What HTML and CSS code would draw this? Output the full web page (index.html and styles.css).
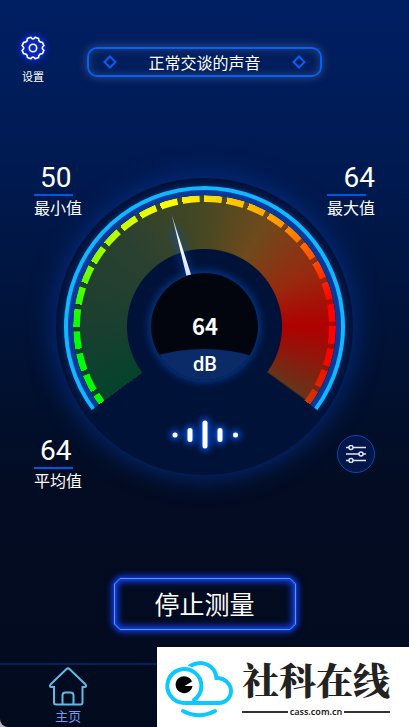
FILE: index.html
```html
<!DOCTYPE html>
<html lang="zh-CN">
<head>
<meta charset="utf-8">
<meta name="viewport" content="width=device-width, initial-scale=1">
<title>分贝测量</title>
<link rel="stylesheet" href="styles.css">
</head>
<body>
<div class="app">
  <header class="header">
    <button class="settings" type="button">
      <svg class="settings-icon" viewBox="0 0 26 26" aria-hidden="true">
        <path d="M10.8 2.2Q13 5.6 15.2 2.2L18.6 3.5Q18.5 7.4 22.4 7.4L23.9 10.7Q20.6 13 23.9 15.3L22.4 18.6Q18.5 18.6 18.6 22.5L15.2 23.8Q13 20.4 10.8 23.8L7.4 22.5Q7.5 18.6 3.6 18.6L2.1 15.3Q5.4 13 2.1 10.7L3.6 7.4Q7.5 7.4 7.4 3.5Z"/>
        <circle cx="13" cy="13" r="3.7"/>
      </svg>
      <span>设置</span>
    </button>
    <div class="level">
      <svg class="diamond" viewBox="0 0 14 14" aria-hidden="true"><path d="M7 1.5 12.500 7 7 12.500 1.500 7Z"/></svg>
      <span>正常交谈的声音</span>
      <svg class="diamond" viewBox="0 0 14 14" aria-hidden="true"><path d="M7 1.5 12.500 7 7 12.500 1.500 7Z"/></svg>
    </div>
  </header>

  <main class="meter">
    <div class="dial">
      <div class="dial-zone"></div>
      <div class="dial-ticks"></div>
      <svg class="dial-art" viewBox="0 0 297 297" role="img" aria-label="64 dB">
        <defs>
          <filter id="glow" x="-50%" y="-50%" width="200%" height="200%">
            <feGaussianBlur stdDeviation="5"/>
          </filter>
          <filter id="glow-small" x="-100%" y="-100%" width="300%" height="300%">
            <feGaussianBlur stdDeviation="3"/>
          </filter>
          <linearGradient id="needle" x1="0" y1="0" x2="0" y2="1">
            <stop offset="0" stop-color="#9fb8d8"/>
            <stop offset=".5" stop-color="#fff"/>
            <stop offset="1" stop-color="#d4e0ff"/>
          </linearGradient>
          <clipPath id="hub"><circle cx="148.500" cy="148.500" r="53.500"/></clipPath>
        </defs>
        <path class="rim-band" d="M39.500 229.200A135.500 135.500 0 1 1 257.500 229.200"/>
        <path class="rim" d="M37.200 230.900A138.500 138.500 0 1 1 259.800 230.900"/>
        <circle class="hub-glow" cx="148.500" cy="148.500" r="54" filter="url(#glow)"/>
        <path class="needle-glow" d="M118 50 133 98" filter="url(#glow)"/>
        <path class="needle" d="M115.500 36 135 96.500 130.500 98Z"/>
        <circle class="hub" cx="148.500" cy="148.500" r="53.500"/>
        <path class="hub-unit" clip-path="url(#hub)" d="M90 181Q147 161 207 181V210H90Z"/>
        <text class="value" x="149" y="157">64</text>
        <text class="unit" x="149" y="193">dB</text>
        <path class="wave-glow" d="M119 257h.1M134 252.500v9M149 245v23M164 252.500v9M179.500 257h.1" filter="url(#glow-small)"/>
        <path class="wave" d="M119 257h.1M134 252.500v9M149 245v23M164 252.500v9M179.500 257h.1"/>
      </svg>
    </div>
    <section class="stat stat-min"><strong>50</strong><i></i><span>最小值</span></section>
    <section class="stat stat-max"><strong>64</strong><i></i><span>最大值</span></section>
    <section class="stat stat-avg"><strong>64</strong><i></i><span>平均值</span></section>
    <button class="tune" type="button" aria-label="校准">
      <svg viewBox="0 0 20 18" aria-hidden="true">
        <path d="M0 2.500h3M7 2.500h13M0 9h13M17 9h3M0 15.500h3M7 15.500h13"/>
        <circle cx="5" cy="2.500" r="2"/><circle cx="15" cy="9" r="2"/><circle cx="5" cy="15.500" r="2"/>
      </svg>
    </button>
  </main>

  <button class="stop" type="button">
    <svg class="stop-frame" viewBox="0 0 182 52" aria-hidden="true">
      <path class="frame-glow" d="M6 1H176L181 6V46L176 51H6L1 46V6Z"/>
      <path class="frame-line" d="M6 .500H176L181.500 6V46L176 51.500H6L.500 46V6Z"/>
    </svg>
    <span>停止测量</span>
  </button>

  <nav class="tabs">
    <a class="tab" href="#home">
      <svg viewBox="0 0 38 39" aria-hidden="true">
        <path d="M17.500 2Q19 .800 20.500 2L36.500 17.500Q38 19.800 35.500 20H33.500V35.500Q33.500 37.500 31.500 37.500H7Q5 37.500 5 35.500V20H2.500Q0 19.800 1.500 17.500ZM13.500 37V28.500Q13.500 25.500 16.500 25.500H21.500Q24.500 25.500 24.500 28.500V37"/>
      </svg>
      <span>主页</span>
    </a>
  </nav>

  <aside class="brand">
    <svg class="brand-logo" viewBox="0 0 70 60" aria-hidden="true">
      <path class="cloud" d="M25 6C37-1 50 5 51.500 18C60 18 66 24 66 31C66 38 60 43 54 43H19"/>
      <circle class="cloud-gap" cx="19" cy="26" r="20.500"/>
      <path class="cloud" d="M19 43A17 17 0 1 1 29 40M19 43H50"/>
      <path class="pupil" d="M19.500 26 27 21.500A8.500 8.500 0 1 0 27.500 26Z"/>
      <path class="cloud" d="M18 51Q34 59.500 50 51"/>
    </svg>
    <div class="brand-text">
      <strong>社科在线</strong>
      <small>cass.com.cn</small>
    </div>
  </aside>
</div>
</body>
</html>
```
FILE: styles.css
```css
* { box-sizing: border-box; }

html { background: #b9b3bb; }

body {
  margin: 0;
  color: #fff;
  font-family: "Noto Sans CJK SC", sans-serif;
}

button {
  padding: 0;
  border: 0;
  background: none;
  color: inherit;
  font: inherit;
}

.app {
  position: relative;
  display: flex;
  flex-direction: column;
  min-height: 100vh;
  overflow: hidden;
  border-bottom-left-radius: 8px;
  background: linear-gradient(#001f63, #001a52 22%, #001338 45%, #030c22 67%, #020b1e);
}

.header {
  display: grid;
  grid-template-columns: 66px 1fr 66px;
  padding: 35px 21px 0 0;
  height: 162px;
  align-items: start;
}

.settings {
  display: flex;
  flex-direction: column;
  align-items: center;
  gap: 6px;
  font-size: 11px;
  line-height: 18px;
}

.settings-icon {
  width: 26px;
  height: 26px;
  fill: none;
  stroke: #fff;
  stroke-width: 1.6;
  stroke-linejoin: round;
  filter: drop-shadow(0 0 3px #1030ff) drop-shadow(0 0 2px #1030ff);
}

.level {
  display: flex;
  align-items: center;
  justify-content: space-between;
  height: 30px;
  margin: 12px 0 0 21px;
  padding: 0 14px;
  border: 2px solid #0560f5;
  border-radius: 10px;
  box-shadow: 0 0 10px #35508f, inset 0 0 8px #2a4582;
  font-size: 16px;
  line-height: 24px;
}

.diamond {
  width: 14px;
  height: 14px;
  fill: none;
  stroke: #0560f5;
  stroke-width: 2;
}

.meter {
  display: grid;
  grid-template: 1fr 1fr / 1fr 1fr;
  padding: 0 34px;
}

.dial {
  grid-area: 1 / 1 / 3 / 3;
  display: grid;
  justify-self: center;
  width: 297px;
  height: 297px;
  margin: 16px 0;
  border-radius: 50%;
  background: #001238;
  box-shadow: 0 0 28px #053088;
}

.dial > * { grid-area: 1 / 1; }

.dial-zone {
  margin: 17px;
  border-radius: 50%;
  background: conic-gradient(from 233.5deg, #04432c, #1a3f30 36deg, #2b4130 85deg, #464822 126deg, #6f4a1c 157deg, #98290f 190deg, #b00000 216deg, #8c1a0c 235deg, #65341a 252deg, transparent 253deg);
  mask: radial-gradient(circle, transparent 77px, #000 78px);
}

.dial-ticks {
  margin: 17px;
  border-radius: 50%;
  background: conic-gradient(from 233.5deg, #00ff00 35deg, #80ff00 65deg, #ccff00 88deg, #ffff00 110deg, #ffd800 131deg, #ff9900 163deg, #ff5000 185deg, #ff0000 205deg, #ff0000 230deg, #d03800 253deg, transparent 253deg);
  mask:
    repeating-conic-gradient(#000 0 7.6deg, transparent 8deg 10deg) intersect,
    radial-gradient(circle, transparent 124px, #000 125px);
}

.dial-art {
  position: relative;
  width: 100%;
  overflow: visible;
}
.dial-art path { fill: none; }

.rim-band { stroke: #063a9c; stroke-width: 8; }
.rim { stroke: #10b8ff; stroke-width: 4; filter: drop-shadow(0 0 3px #0a3a98); }
.hub-glow { fill: #0848b0; }
.hub { fill: #02040e; }
.dial-art .hub-unit { fill: #0a2a68; }
.dial-art .needle { fill: url(#needle); }
.needle-glow { stroke: #0850b8; stroke-width: 8; opacity: .5; }

.value, .unit {
  fill: #fff;
  text-anchor: middle;
}
.value { font: 700 22px "Noto Sans CJK SC", sans-serif; }
.unit { font: 500 20px Roboto, sans-serif; }

.wave, .wave-glow { stroke-width: 5; stroke-linecap: round; }
.wave { stroke: #fff; }
.wave-glow { stroke: #0b5cff; stroke-width: 9; }

.stat {
  display: flex;
  flex-direction: column;
  width: 48px;
  font-size: 16px;
  line-height: 22px;
}

.stat strong {
  padding-left: 6px;
  font: 400 28px/32px Roboto, sans-serif;
}

.stat i {
  width: 39px;
  height: 2px;
  background: #0058e0;
}

.stat-min { grid-area: 1 / 1; }
.stat-max { grid-area: 1 / 2; justify-self: end; }
.stat-max strong { padding: 0; text-align: right; }
.stat-avg { grid-area: 2 / 1; align-self: end; }

.tune {
  grid-area: 2 / 2;
  place-self: end;
  display: grid;
  place-items: center;
  width: 38px;
  height: 38px;
  margin-bottom: 18px;
  border: 1px solid #0c48b4;
  border-radius: 50%;
  background: #03164a;
}

.tune svg {
  width: 20px;
  height: 18px;
  fill: none;
  stroke: #dfe5f2;
  stroke-width: 1.5;
}

.stop {
  display: grid;
  align-self: center;
  place-items: center;
  width: 182px;
  height: 52px;
  margin-top: 87px;
  font-size: 25px;
  line-height: 36px;
}

.stop > * { grid-area: 1 / 1; }
.stop span { padding-bottom: 2px; }
.stop-frame { width: 182px; height: 52px; overflow: visible; fill: none; }
.frame-glow { stroke: #1438c8; stroke-width: 3; filter: drop-shadow(0 0 3px #1438e0) drop-shadow(0 0 2px #1438e0); }
.frame-line { stroke: #4a9cf0; stroke-width: 1; }

.tabs {
  display: grid;
  grid-template-columns: repeat(3, 1fr);
  height: 64px;
  margin-top: auto;
  border-top: 2px solid #0c2058;
}

.tab {
  display: flex;
  flex-direction: column;
  align-items: center;
  padding-top: 2px;
  color: #719cf0;
  font-size: 13px;
  line-height: 20px;
  text-decoration: none;
}

.tab svg {
  width: 38px;
  height: 39px;
  fill: none;
  stroke: #62b8e4;
  stroke-width: 2;
}

.brand {
  position: absolute;
  right: 0;
  bottom: 0;
  display: flex;
  gap: 7px;
  width: 252px;
  height: 80px;
  padding: 13px 19px 0 8px;
  background: #fff;
  color: #222;
}

.brand-logo { width: 70px; height: 60px; overflow: visible; }
.cloud { fill: none; stroke: #0bc8ff; stroke-width: 4; stroke-linecap: round; }
.cloud-gap { fill: #fff; }
.pupil { fill: #000; }

.brand-text { flex: 1; }

.brand-text strong {
  display: block;
  font: 900 37px/38px "Noto Serif CJK SC", "Noto Sans CJK SC", serif;
  white-space: nowrap;
}

.brand-text small {
  display: flex;
  align-items: center;
  gap: 2px;
  padding-top: 5px;
  font: 600 9px/18px "Noto Sans", sans-serif;
}

.brand-text small::before,
.brand-text small::after {
  content: "";
  flex: 1;
  height: 2px;
  background: #333;
}
```
